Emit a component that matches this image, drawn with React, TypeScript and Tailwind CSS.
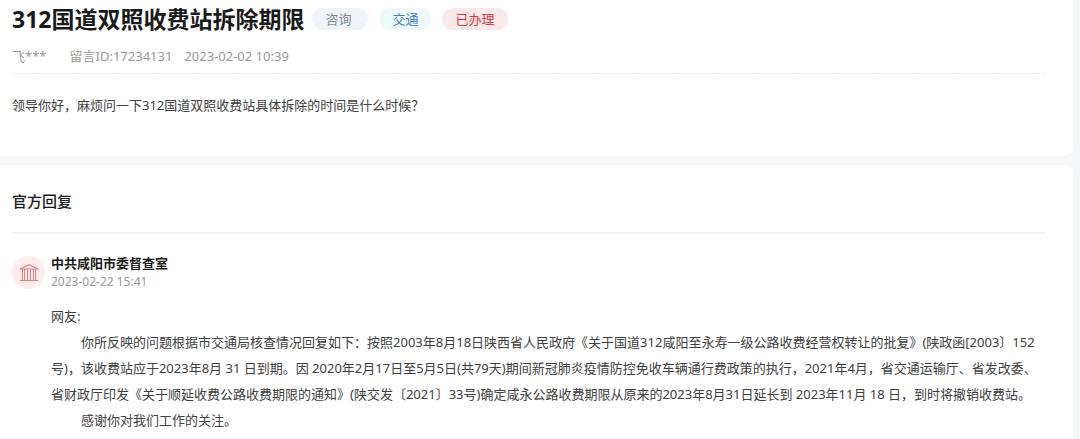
const tags = [
  { label: '咨询', style: 'w-14 bg-[#f0f4fa] text-[#7c8a9e]' },
  { label: '交通', style: 'bg-[#edfcfa] text-[#437bc9]' },
  { label: '已办理', style: 'bg-[#fae9eb] text-[#dc3545]' },
];

function InstitutionIcon() {
  return (
    <svg
      className="size-5"
      viewBox="0 0 20 20"
      fill="none"
      stroke="#e8807c"
      strokeWidth="1"
      aria-hidden="true"
    >
      <path d="M1 6 10 1.700 19 6" strokeWidth="1.200" />
      <path d="M1 6h18M1 17.500h18" strokeWidth="1.200" />
      <path d="M3.500 6v11.500M5.500 6v11.500M8.500 6v11.500M11.500 6v11.500M14.500 6v11.500M16.500 6v11.500" />
    </svg>
  );
}

function Centered({ children }: { children: string }) {
  return <span className="font-['Noto_Sans_CJK_TC',sans-serif]">{children}</span>;
}

export default function App() {
  return (
    <main
      lang="zh-CN"
      className="min-h-screen bg-[#f7f8fa] pr-[7px] font-['Noto_Sans','Noto_Sans_CJK_SC',sans-serif] text-[13px] text-[#404040]"
    >
      <article className="rounded-br-lg bg-white pr-7 pb-[38px] pl-3">
        <header className="border-b border-dashed border-[#e8e8e8] pb-[7px]">
          <div className="flex items-center gap-[11px]">
            <h1 className="-mr-[3px] text-[23px] leading-[38px] font-bold text-[#1a1a1a]">
              312国道双照收费站拆除期限
            </h1>
            {tags.map((tag) => (
              <span key={tag.label} className={`rounded-full px-[13px] leading-[22px] ${tag.style}`}>
                {tag.label}
              </span>
            ))}
          </div>
          <div className="mt-2 flex leading-5 text-[#999]">
            <span className="mr-[23px]">飞***</span>
            <span className="mr-3">留言ID:17234131</span>
            <time>2023-02-02 10:39</time>
          </div>
        </header>
        <p className="mt-[18px] leading-[26px]">
          领导你好，麻烦问一下312国道双照收费站具体拆除的时间是什么时候<Centered>？</Centered>
        </p>
      </article>

      <section className="mt-[9px] rounded-tr-lg bg-white pr-7 pb-2 pl-3">
        <h2 className="border-b-2 border-[#f2f2f2] pt-6 pb-[19px] text-[15px] leading-6 font-medium text-[#1a1a1a]">
          官方回复
        </h2>
        <div className="mt-[19px] flex gap-1.5">
          <div className="mt-[3px] flex size-[33px] shrink-0 items-center justify-center rounded-full bg-[#ffeded]">
            <InstitutionIcon />
          </div>
          <div className="min-w-0 flex-1">
            <h3 className="leading-5 font-bold text-[#1a1a1a]">中共咸阳市委督查室</h3>
            <time className="block text-[12px] leading-[18px] text-[#999]">2023-02-22 15:41</time>
            <div className="mt-3 leading-[26px]">
              <p>网友:</p>
              <p className="indent-[30px]">
                你所反映的问题根据市交通局核查情况回复如下<Centered>：</Centered>按照2003年8月18日陕西省人民政府《关于国道312咸阳至永寿一级公路收费经营权转让的批复》(陕政函[2003〕152号)，该收费站应于2023年8月 31 日到期。因 2020年2月17日至5月5日(共79天)期间新冠肺炎疫情防控免收车辆通行费政策的执行，2021年4月，省交通运输厅、省发改委、省财政厅印发《关于顺延收费公路收费期限的通知》(陕交发〔2021〕33号)确定咸永公路收费期限从原来的2023年8月31日延长到 2023年11月 18 日，到时将撤销收费站。
              </p>
              <p className="indent-[30px]">感谢你对我们工作的关注。</p>
            </div>
          </div>
        </div>
      </section>
    </main>
  );
}
